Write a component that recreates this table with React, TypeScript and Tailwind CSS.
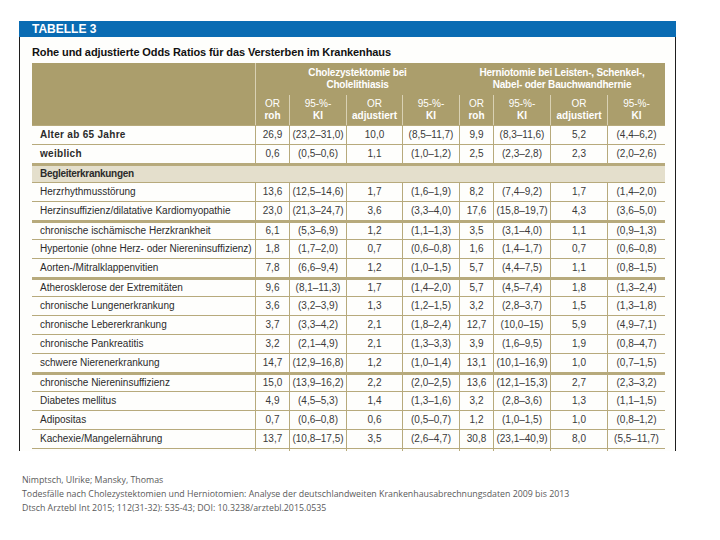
import React from 'react';

type Row = {
  label: string;
  values: string[];
  bold?: boolean;
  thick?: boolean;
};

const rows: Row[] = [
  { label: 'Alter ab 65 Jahre', bold: true, values: ['26,9', '(23,2–31,0)', '10,0', '(8,5–11,7)', '9,9', '(8,3–11,6)', '5,2', '(4,4–6,2)'] },
  { label: 'weiblich', bold: true, values: ['0,6', '(0,5–0,6)', '1,1', '(1,0–1,2)', '2,5', '(2,3–2,8)', '2,3', '(2,0–2,6)'] },
  { label: 'Herzrhythmusstörung', values: ['13,6', '(12,5–14,6)', '1,7', '(1,6–1,9)', '8,2', '(7,4–9,2)', '1,7', '(1,4–2,0)'] },
  { label: 'Herzinsuffizienz/dilatative Kardiomyopathie', values: ['23,0', '(21,3–24,7)', '3,6', '(3,3–4,0)', '17,6', '(15,8–19,7)', '4,3', '(3,6–5,0)'] },
  { label: 'chronische ischämische Herzkrankheit', thick: true, values: ['6,1', '(5,3–6,9)', '1,2', '(1,1–1,3)', '3,5', '(3,1–4,0)', '1,1', '(0,9–1,3)'] },
  { label: 'Hypertonie (ohne Herz- oder Niereninsuffizienz)', values: ['1,8', '(1,7–2,0)', '0,7', '(0,6–0,8)', '1,6', '(1,4–1,7)', '0,7', '(0,6–0,8)'] },
  { label: 'Aorten-/Mitralklappenvitien', values: ['7,8', '(6,6–9,4)', '1,2', '(1,0–1,5)', '5,7', '(4,4–7,5)', '1,1', '(0,8–1,5)'] },
  { label: 'Atherosklerose der Extremitäten', thick: true, values: ['9,6', '(8,1–11,3)', '1,7', '(1,4–2,0)', '5,7', '(4,5–7,4)', '1,8', '(1,3–2,4)'] },
  { label: 'chronische Lungenerkrankung', values: ['3,6', '(3,2–3,9)', '1,3', '(1,2–1,5)', '3,2', '(2,8–3,7)', '1,5', '(1,3–1,8)'] },
  { label: 'chronische Lebererkrankung', values: ['3,7', '(3,3–4,2)', '2,1', '(1,8–2,4)', '12,7', '(10,0–15)', '5,9', '(4,9–7,1)'] },
  { label: 'chronische Pankreatitis', values: ['3,2', '(2,1–4,9)', '2,1', '(1,3–3,3)', '3,9', '(1,6–9,5)', '1,9', '(0,8–4,7)'] },
  { label: 'schwere Nierenerkrankung', values: ['14,7', '(12,9–16,8)', '1,2', '(1,0–1,4)', '13,1', '(10,1–16,9)', '1,0', '(0,7–1,5)'] },
  { label: 'chronische Niereninsuffizienz', thick: true, values: ['15,0', '(13,9–16,2)', '2,2', '(2,0–2,5)', '13,6', '(12,1–15,3)', '2,7', '(2,3–3,2)'] },
  { label: 'Diabetes mellitus', values: ['4,9', '(4,5–5,3)', '1,4', '(1,3–1,6)', '3,2', '(2,8–3,6)', '1,3', '(1,1–1,5)'] },
  { label: 'Adipositas', values: ['0,7', '(0,6–0,8)', '0,6', '(0,5–0,7)', '1,2', '(1,0–1,5)', '1,0', '(0,8–1,2)'] },
  { label: 'Kachexie/Mangelernährung', values: ['13,7', '(10,8–17,5)', '3,5', '(2,6–4,7)', '30,8', '(23,1–40,9)', '8,0', '(5,5–11,7)'] },
];

// widths of the eight number columns (label column is w-[223px])
const colW = ['w-[34px]', 'w-[57px]', 'w-[56px]', 'w-[57px]', 'w-[34px]', 'w-[57px]', 'w-[57px]', 'w-[58px]'];

const subHeads: [string, string][] = [
  ['OR', 'roh'],
  ['95-%-', 'KI'],
  ['OR', 'adjustiert'],
  ['95-%-', 'KI'],
  ['OR', 'roh'],
  ['95-%-', 'KI'],
  ['OR', 'adjustiert'],
  ['95-%-', 'KI'],
];

const DataRow: React.FC<{ row: Row }> = ({ row }) => (
  <div
    className={`flex h-[19px] border-t-[#b7aa7c] ${row.thick ? 'border-t-[3px]' : 'border-t'}`}
  >
    <div
      className={`w-[223px] pl-2 flex items-center whitespace-nowrap text-[#2b2b2b] ${row.bold ? 'font-bold tracking-[0.3px]' : ''}`}
    >
      {row.label}
    </div>
    {row.values.map((v, i) => (
      <div
        key={i}
        className={`${colW[i]} border-l border-[#b7aa7c] flex items-center justify-center whitespace-nowrap text-[#3a3a3a]`}
      >
        {v}
      </div>
    ))}
  </div>
);

export default function App() {
  return (
    <div className="min-h-screen bg-white pt-[21px] pl-[19px] font-['Liberation_Sans',Arial,sans-serif]">
      <div className="w-[657px]">
        <div className="h-4 bg-[#0a6cb3] pl-[13px] text-[12px] leading-4 font-bold text-white">
          TABELLE 3
        </div>
        <div className="border-x border-[#1e1e1e] pl-3 pr-[10px] pt-[9px] bg-[#fefefc]">
          <div className="h-[17px] text-[11px] leading-[13px] font-bold text-[#111] tracking-[-0.1px]">
            Rohe und adjustierte Odds Ratios für das Versterben im Krankenhaus
          </div>

          <div className="w-[633px] text-[10px] leading-3">
            {/* header */}
            <div className="bg-[#ab9e6c] text-white">
              <div className="flex h-[32px]">
                <div className="w-[223px]" />
                <div className="w-[204px] border-l border-[#d9d1b4] flex flex-col items-center justify-center font-bold tracking-[-0.2px]">
                  <span>Cholezystektomie bei</span>
                  <span>Cholelithiasis</span>
                </div>
                <div className="w-[206px] flex flex-col items-center justify-center font-bold tracking-[-0.2px]">
                  <span>Herniotomie bei Leisten-, Schenkel-,</span>
                  <span>Nabel- oder Bauchwandhernie</span>
                </div>
              </div>
              <div className="flex h-[30px]">
                <div className="w-[223px]" />
                {subHeads.map(([a, b], i) => (
                  <div
                    key={i}
                    className={`${colW[i]} border-l border-[#d9d1b4] flex flex-col items-center justify-center`}
                  >
                    <span>{a}</span>
                    <span className="font-bold">{b}</span>
                  </div>
                ))}
              </div>
            </div>

            {/* body */}
            <DataRow row={rows[0]} />
            <DataRow row={rows[1]} />
            <div className="flex h-[19px] border-t-[3px] border-[#b7aa7c] bg-[#e4dfcc]">
              <div className="pl-2 flex items-center font-bold text-[#2b2b2b] tracking-[-0.3px]">Begleiterkrankungen</div>
            </div>
            {rows.slice(2).map((r) => (
              <DataRow key={r.label} row={r} />
            ))}
            <div className="flex h-[3px] border-t border-[#b7aa7c]">
              <div className="w-[223px]" />
              {colW.map((w, i) => (
                <div key={i} className={`${w} border-l border-[#b7aa7c]`} />
              ))}
            </div>
          </div>
        </div>
      </div>

      <div className="mt-[22px] ml-[3px] font-['Open_Sans',sans-serif] text-[8.8px] leading-[14px] text-[#5a5a5a]">
        <div>Nimptsch, Ulrike; Mansky, Thomas</div>
        <div>
          Todesfälle nach Cholezystektomien und Herniotomien: Analyse der deutschlandweiten Krankenhausabrechnungsdaten 2009 bis 2013
        </div>
        <div>Dtsch Arztebl Int 2015; 112(31-32): 535-43; DOI: 10.3238/arztebl.2015.0535</div>
      </div>
    </div>
  );
}
